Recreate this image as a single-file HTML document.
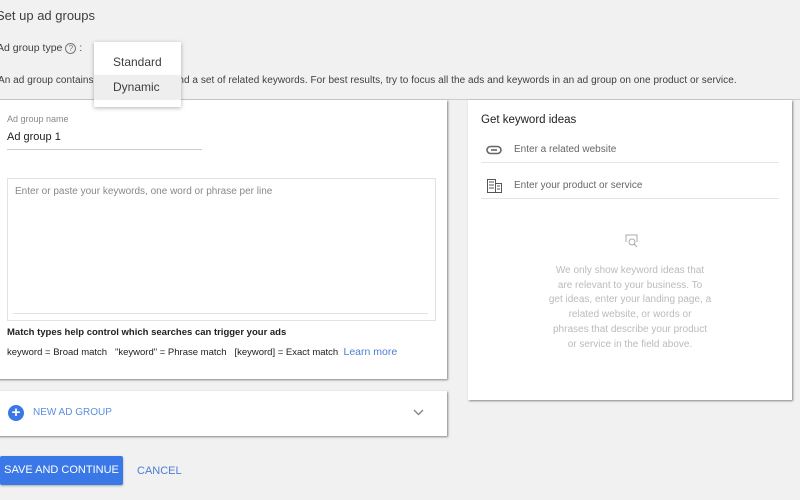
<!DOCTYPE html>
<html><head><style>
body{margin:0;width:800px;height:500px;background:#f1f1f1;font-family:"Liberation Sans",sans-serif;position:relative;overflow:hidden;color:#202124}
.a{position:absolute;white-space:nowrap}
.card{position:absolute;background:#fff;box-shadow:1px 1px 2px rgba(0,0,0,.45)}
</style></head><body>
<div class="a" style="left:-4px;top:8px;font-size:13px;color:#3c4043">Set up ad groups</div>
<div class="a" style="left:-3px;top:42px;font-size:10.5px;color:#3c4043">Ad group type <span style="display:inline-block;width:9px;height:9px;border:1px solid #777;border-radius:50%;font-size:8px;text-align:center;line-height:9px;color:#777">?</span> :</div>
<div class="a" style="left:-2px;top:75px;font-size:10px;letter-spacing:0.05px;color:#3c4043">An ad group contains one or more ads and a set of related keywords. For best results, try to focus all the ads and keywords in an ad group on one product or service.</div>
<div class="a" style="left:0;top:99px;width:800px;height:1px;background:#ccc"></div>
<div class="card" style="left:94px;top:42px;width:87px;height:65px;box-shadow:0 1px 4px rgba(0,0,0,.3);z-index:3">
<div style="height:33px;line-height:40px;padding-left:19px;font-size:12px;color:#3c4043">Standard</div>
<div style="height:25px;line-height:25px;padding-left:19px;font-size:12px;background:#eee;color:#3c4043">Dynamic</div></div>
<div class="card" style="left:-5px;top:100px;width:452px;height:279px">
<div class="a" style="left:12px;top:14px;font-size:9px;color:#888">Ad group name</div>
<div class="a" style="left:12px;top:31px;font-size:11px">Ad group 1</div>
<div class="a" style="left:12px;top:49px;width:195px;height:1px;background:#ccc"></div>
<div class="a" style="left:12px;top:78px;width:427px;height:141px;border:1px solid #e2e2e2"></div>
<div class="a" style="left:20px;top:86px;font-size:10px;color:#888">Enter or paste your keywords, one word or phrase per line</div>
<div class="a" style="left:18px;top:213px;width:415px;height:1px;background:#e2e2e2"></div>
<div class="a" style="left:12px;top:227px;font-size:9.5px;font-weight:bold">Match types help control which searches can trigger your ads</div>
<div class="a" style="left:12px;top:246px;font-size:9.5px">keyword = Broad match &nbsp;&nbsp;"keyword" = Phrase match &nbsp;&nbsp;[keyword] = Exact match &nbsp;<span style="color:#4a7fd4;font-size:10.5px">Learn more</span></div>
</div>
<div class="card" style="left:468px;top:100px;width:324px;height:300px">
<div class="a" style="left:13px;top:14px;font-size:11.5px">Get keyword ideas</div>
<svg class="a" style="left:18px;top:44px" width="16" height="12" viewBox="0 0 16 12"><rect x="1" y="2.5" width="14" height="7" rx="3.5" fill="none" stroke="#666" stroke-width="1.6"/><line x1="5" y1="6" x2="11" y2="6" stroke="#666" stroke-width="1.6"/></svg>
<div class="a" style="left:46px;top:44px;font-size:10px;color:#666">Enter a related website</div>
<div class="a" style="left:13px;top:62px;width:298px;height:1px;background:#e5e5e5"></div>
<svg class="a" style="left:19px;top:79px" width="15" height="14" viewBox="0 0 15 14"><rect x="0.5" y="0.5" width="8" height="13" fill="none" stroke="#555"/><rect x="8.5" y="4.5" width="6" height="9" fill="none" stroke="#555"/><path d="M2 3h5M2 6h5M2 9h5M10 7h3M10 10h3" stroke="#555"/></svg>
<div class="a" style="left:46px;top:80px;font-size:10px;color:#666">Enter your product or service</div>
<div class="a" style="left:13px;top:98px;width:298px;height:1px;background:#e5e5e5"></div>
<svg class="a" style="left:155px;top:133px" width="16" height="16" viewBox="0 0 16 16"><path d="M3 9V2h11v7" fill="none" stroke="#aaa"/><circle cx="9" cy="9" r="3" fill="none" stroke="#aaa"/><line x1="11" y1="11" x2="14" y2="14" stroke="#aaa"/></svg>
<div class="a" style="left:0;top:164px;width:324px;text-align:center;font-size:10px;line-height:14.7px;color:#bbb;white-space:normal">We only show keyword ideas that<br>are relevant to your business. To<br>get ideas, enter your landing page, a<br>related website, or words or<br>phrases that describe your product<br>or service in the field above.</div>
</div>
<div class="card" style="left:-5px;top:391px;width:452px;height:45px">
<div class="a" style="left:13px;top:14px;width:16px;height:16px;border-radius:50%;background:#3b78e7;color:#fff;font-size:15px;line-height:16px;text-align:center;font-weight:bold">+</div>
<div class="a" style="left:38px;top:16px;font-size:10px;color:#5b8fe0">NEW AD GROUP</div>
<svg class="a" style="left:418px;top:18px" width="11" height="8" viewBox="0 0 11 8"><path d="M1 1l4.5 4.5L10 1" fill="none" stroke="#888" stroke-width="1.4"/></svg>
</div>
<div class="a" style="left:0;top:456px;width:123px;height:29px;background:#3b78e7;border-radius:2px;box-shadow:0 1px 2px rgba(0,0,0,.3);color:#fff;font-size:11px;line-height:29px;text-align:center">SAVE AND CONTINUE</div>
<div class="a" style="left:137px;top:465px;font-size:11px;color:#4a7fd4">CANCEL</div>
</body></html>
